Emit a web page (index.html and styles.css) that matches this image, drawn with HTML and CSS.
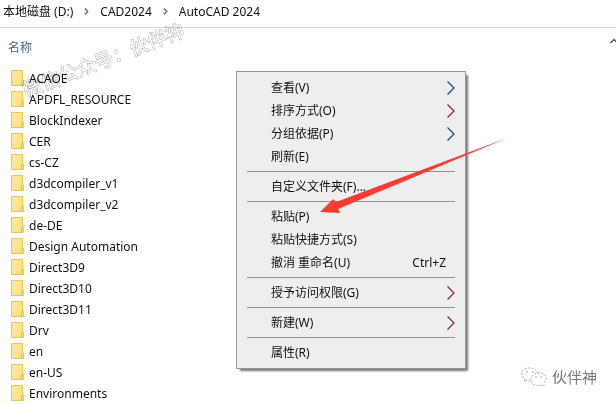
FILE: index.html
```html
<!DOCTYPE html>
<html lang="zh-CN">
<head>
<meta charset="utf-8">
<title>AutoCAD 2024</title>
<link rel="stylesheet" href="styles.css">
</head>
<body>
<svg class="defs" aria-hidden="true">
  <defs>
    <linearGradient id="paper" x1="0" y1="0" x2="1" y2="1"><stop offset="0" stop-color="#ffeaa3"/><stop offset="1" stop-color="#ffdd7c"/></linearGradient>
    <symbol id="folder" viewBox="0 0 13 16"><path d="M.5.5h11v9.500h1v5.500H.5z" fill="url(#paper)" stroke="#e8c655"/><path d="M10.500 15.500v-4l1-1.500" fill="none" stroke="#e3bd45"/></symbol>
    <symbol id="more" viewBox="0 0 8 14"><path d="M.5.5 7 7 .5 13.500" fill="none" stroke="currentColor" stroke-width="1.200"/></symbol>
    <symbol id="crumb" viewBox="0 0 5 7"><path d="M.8.5 3.800 3.500.8 6.500" fill="none" stroke="#666" stroke-width="1.300"/></symbol>
  </defs>
</svg>
<nav class="path" aria-label="路径">
  <a href="#">本地磁盘 (D:)</a><svg class="crumb"><use href="#crumb"/></svg>
  <a href="#">CAD2024</a><svg class="crumb"><use href="#crumb"/></svg>
  <a href="#">AutoCAD 2024</a>
</nav>
<main>
  <header class="columns"><button>名称</button><svg class="caret" viewBox="0 0 8 6"><path d="M.5 5 4 1.500 7.500 5" fill="none" stroke="#555" stroke-width="1.400"/></svg></header>
  <ul class="files">
    <li><svg><use href="#folder"/></svg>ACAOE</li>
    <li><svg><use href="#folder"/></svg>APDFL_RESOURCE</li>
    <li><svg><use href="#folder"/></svg>BlockIndexer</li>
    <li><svg><use href="#folder"/></svg>CER</li>
    <li><svg><use href="#folder"/></svg>cs-CZ</li>
    <li><svg><use href="#folder"/></svg>d3dcompiler_v1</li>
    <li><svg><use href="#folder"/></svg>d3dcompiler_v2</li>
    <li><svg><use href="#folder"/></svg>de-DE</li>
    <li><svg><use href="#folder"/></svg>Design Automation</li>
    <li><svg><use href="#folder"/></svg>Direct3D9</li>
    <li><svg><use href="#folder"/></svg>Direct3D10</li>
    <li><svg><use href="#folder"/></svg>Direct3D11</li>
    <li><svg><use href="#folder"/></svg>Drv</li>
    <li><svg><use href="#folder"/></svg>en</li>
    <li><svg><use href="#folder"/></svg>en-US</li>
    <li><svg><use href="#folder"/></svg>Environments</li>
  </ul>
</main>
<div class="menu" role="menu">
  <button role="menuitem">查看(V)<svg class="more blue"><use href="#more"/></svg></button>
  <button role="menuitem">排序方式(O)<svg class="more red"><use href="#more"/></svg></button>
  <button role="menuitem">分组依据(P)<svg class="more blue"><use href="#more"/></svg></button>
  <button role="menuitem">刷新(E)</button>
  <hr>
  <button role="menuitem">自定义文件夹(F)...</button>
  <hr>
  <button role="menuitem">粘贴(P)</button>
  <button role="menuitem">粘贴快捷方式(S)</button>
  <button role="menuitem">撤消 重命名(U)<kbd>Ctrl+Z</kbd></button>
  <hr>
  <button role="menuitem">授予访问权限(G)<svg class="more red"><use href="#more"/></svg></button>
  <hr>
  <button role="menuitem">新建(W)<svg class="more red"><use href="#more"/></svg></button>
  <hr>
  <button role="menuitem">属性(R)</button>
</div>
<svg class="pointer" viewBox="0 0 188 76" aria-hidden="true"><path d="M0 74 13 61 16 64 187 0 18 71 20 75z" fill="#fc3a35"/></svg>
<div class="watermark">微信公众号：伙伴神</div>
<div class="brand">
  <svg viewBox="0 0 26 20" aria-hidden="true"><g fill="#fff" stroke="#999" stroke-width=".8" stroke-dasharray="2 1.500"><path d="M4 14 3 11C-3 5 4 0 9 1c5 0 8 3 8 7 0 5-5 7-10 5z"/><path d="M21 18c-6 2-11-1-11-5 0-5 4-7 8-7 7 0 9 6 5 10v3z"/></g><g fill="#888"><circle cx="6" cy="5" r=".7"/><circle cx="12" cy="5" r=".7"/><circle cx="15" cy="10" r=".7"/><circle cx="20" cy="10" r=".7"/></g></svg>
  <span>伙伴神</span>
</div>
</body>
</html>
```
FILE: styles.css
```css
* { box-sizing: border-box; }
body {
  position: relative;
  margin: 0;
  min-height: 100vh;
  overflow: hidden;
  background: #fff;
  color: #111;
  font: 12px/20px "Noto Sans", "Noto Sans CJK SC", sans-serif;
}
button { padding: 0; border: 0; background: none; color: inherit; font: inherit; text-align: left; }
.defs { position: absolute; width: 0; height: 0; }
.path {
  display: flex;
  align-items: center;
  gap: 11px;
  height: 28px;
  padding: 0 3px 4px;
  border-bottom: 1px solid #d9d9d9;
}
.path a { color: inherit; text-decoration: none; white-space: nowrap; }
.crumb { width: 5px; height: 7px; }
.columns { display: flex; justify-content: space-between; height: 40px; padding: 10px 0 10px 8px; color: #4c607a; }
.caret { width: 8px; height: 6px; margin-right: -2px; }
.files { margin: 0; padding: 0 0 0 11px; list-style: none; }
.files li { display: flex; align-items: center; gap: 5px; height: 21px; }
.files svg { width: 13px; height: 16px; margin-bottom: 1px; }
.menu {
  position: absolute;
  left: 236px;
  top: 71px;
  width: 230px;
  padding: 4px 10px;
  border: 1px solid #979797;
  background: #eee;
  box-shadow: 3px 3px 2px -1px #777;
}
.menu button { display: flex; align-items: center; width: 100%; height: 23px; padding-left: 24px; }
.menu hr { height: 1px; margin: 3px 0; border: 0; background: #919191; }
.more { width: 8px; height: 14px; margin-left: auto; }
.blue { color: #147; }
.red { color: #823; }
kbd { margin: 0 9px 0 auto; font: inherit; }
.pointer { position: absolute; left: 320px; top: 138px; width: 188px; height: 76px; }
.watermark {
  position: absolute;
  left: 18px;
  top: 50px;
  color: #fff;
  font-size: 19px;
  white-space: nowrap;
  -webkit-text-stroke: 1px #aaa;
  paint-order: stroke;
  mix-blend-mode: multiply;
  transform: rotate(-21deg);
}
.brand { position: absolute; left: 521px; top: 367px; display: flex; align-items: center; gap: 5px; color: #777; font-size: 15px; }
.brand svg { width: 26px; height: 20px; }
```
